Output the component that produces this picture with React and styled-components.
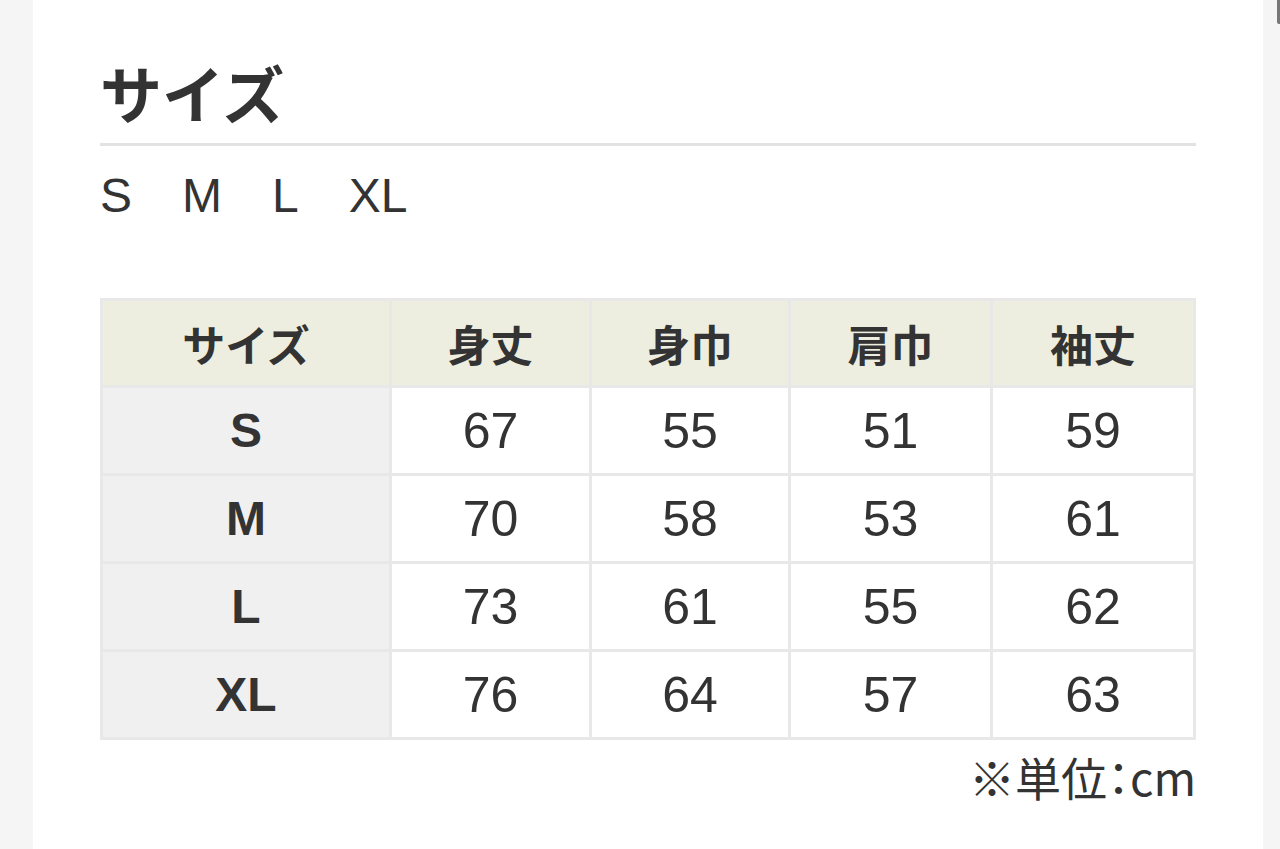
import React from 'react';
import styled, { createGlobalStyle } from 'styled-components';

const GlobalStyle = createGlobalStyle`
  html, body {
    margin: 0;
    padding: 0;
    background: #f5f5f5;
  }
  body {
    font-family: "Noto Sans CJK JP", "Liberation Sans", sans-serif;
    color: #333;
  }
`;

const Page = styled.div`
  display: flex;
  min-height: 849px;
  padding: 0 17px 0 33px;
`;

const Panel = styled.main`
  flex: 1;
  background: #fff;
  padding: 56px 67px 40px 67px;
`;

const Heading = styled.h2`
  margin: 0;
  font-size: 62px;
  font-weight: 700;
  line-height: 72px;
  padding-bottom: 15px;
  border-bottom: 3px solid #e2e2e2;
`;

const SizeList = styled.div`
  display: flex;
  gap: 50px;
  margin-top: 22px;
  font-family: "Liberation Sans", sans-serif;
  font-size: 48px;
  font-weight: 400;
  line-height: 56px;
  color: #333;
`;

const Table = styled.table`
  margin-top: 74px;
  width: 100%;
  border-collapse: separate;
  border-spacing: 0;
  table-layout: fixed;
  border-top: 3px solid #e8e8e8;
  border-left: 3px solid #e8e8e8;
`;

const Cell = styled.td`
  height: 88px;
  box-sizing: border-box;
  border-right: 3px solid #e8e8e8;
  border-bottom: 3px solid #e8e8e8;
  text-align: center;
  vertical-align: middle;
  padding: 0;
  background: ${(p) => (p.$label ? '#f0f0f0' : '#fff')};
  font-family: "Liberation Sans", "Noto Sans CJK JP", sans-serif;
  font-size: ${(p) => (p.$label ? '48px' : '50px')};
  font-weight: ${(p) => (p.$label ? 700 : 400)};
  color: #333;
`;

const HeadCell = styled.th`
  height: 84px;
  border-right: 3px solid #e8e8e8;
  border-bottom: 3px solid #e8e8e8;
  padding: 0;
  text-align: center;
  vertical-align: middle;
  background: #eeeee0;
  font-family: "Noto Sans CJK JP", sans-serif;
  font-size: 43px;
  font-weight: 700;
  color: #333;
`;

const Note = styled.p`
  margin: 8px 0 0;
  text-align: right;
  font-size: 46px;
  line-height: 56px;
  font-weight: 400;
  font-feature-settings: "palt";
`;

const Scrollbar = styled.div`
  position: fixed;
  top: 0;
  right: 0;
  width: 3px;
  height: 24px;
  background: #777;
  border-radius: 0 0 0 2px;
`;

const columns = ['サイズ', '身丈', '身巾', '肩巾', '袖丈'];
const widths = [289, 200, 199, 202, 203];
const rows = [
  ['S', 67, 55, 51, 59],
  ['M', 70, 58, 53, 61],
  ['L', 73, 61, 55, 62],
  ['XL', 76, 64, 57, 63],
];

export default function App() {
  return (
    <>
      <GlobalStyle />
      <Page>
        <Panel>
          <Heading>サイズ</Heading>
          <SizeList>
            <span>S</span>
            <span>M</span>
            <span>L</span>
            <span>XL</span>
          </SizeList>
          <Table>
            <colgroup>
              {widths.map((w, i) => (
                <col key={i} style={{ width: w }} />
              ))}
            </colgroup>
            <thead>
              <tr>
                {columns.map((c) => (
                  <HeadCell key={c}>{c}</HeadCell>
                ))}
              </tr>
            </thead>
            <tbody>
              {rows.map((r) => (
                <tr key={r[0]}>
                  {r.map((v, i) => (
                    <Cell key={i} $label={i === 0}>
                      {v}
                    </Cell>
                  ))}
                </tr>
              ))}
            </tbody>
          </Table>
          <Note>※単位：cm</Note>
        </Panel>
      </Page>
      <Scrollbar />
    </>
  );
}
